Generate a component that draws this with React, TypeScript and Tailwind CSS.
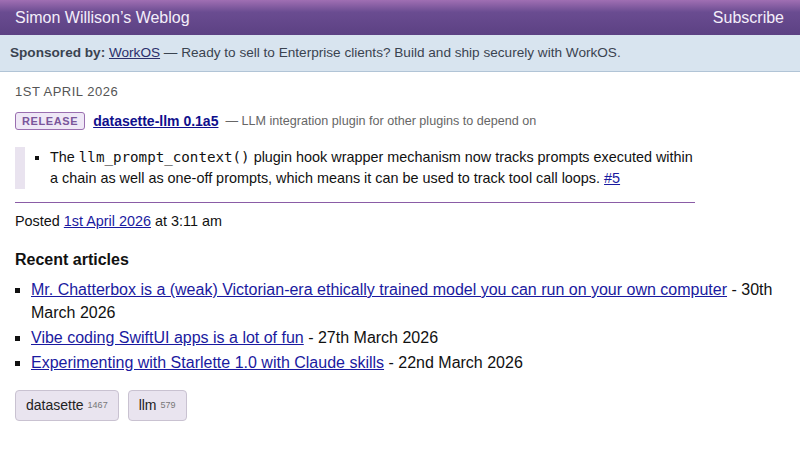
import React from "react";

export default function App() {
  const articles = [
    { title: "Mr. Chatterbox is a (weak) Victorian-era ethically trained model you can run on your own computer", date: "30th March 2026" },
    { title: "Vibe coding SwiftUI apps is a lot of fun", date: "27th March 2026" },
    { title: "Experimenting with Starlette 1.0 with Claude skills", date: "22nd March 2026" },
  ];
  return (
    <div className="w-[800px] h-[450px] overflow-hidden bg-white text-[#111]" style={{ fontFamily: '"Liberation Sans", Arial, sans-serif' }}>
      <div className="h-[35px] flex items-center justify-between px-[15px] bg-[linear-gradient(to_bottom,#a06fb3_0%,#6a4c91_35%,#5c4183_100%)] text-[#f4eefa] text-[16px]">
        <span>Simon Willison’s Weblog</span>
        <span className="pr-[1px]">Subscribe</span>
      </div>
      <div className="h-[37px] flex items-center px-[10px] bg-[#d8e4ef] border-b border-[#b1c4d6] text-[13.6px] text-[#3a4350]">
        <span className="font-bold">Sponsored by:</span>
        <span>&nbsp;</span>
        <a className="underline text-[#2b2f6b]">WorkOS</a>
        <span>&nbsp;— Ready to sell to Enterprise clients? Build and ship securely with WorkOS.</span>
      </div>
      <div className="px-[15px]">
        <div className="w-[680px]">
          <div className="mt-[12px] h-[15px] leading-[15px] text-[13px] uppercase tracking-[0.5px] text-[#555]">1st April 2026</div>
          <div className="mt-[12px] h-[20px] flex items-center text-[12.6px]">
            <span className="h-[18px] flex items-center px-[6px] rounded-[3px] border border-[#9a6fb0] bg-[#efe8f6] text-[#7b569b] text-[11px] font-bold tracking-[0.6px]">RELEASE</span>
            <a className="ml-[8px] font-bold text-[14px] text-[#0f0f8c] underline">datasette-llm 0.1a5</a>
            <span className="ml-[7px] text-[#666]">— LLM integration plugin for other plugins to depend on</span>
          </div>
          <div className="mt-[16px] border-l-[10px] border-[#e9e3ef] pl-[25px] text-[14.4px] leading-[21px]">
            <ul className="list-[square] pl-0">
              <li>
                The <code className="text-[14.2px]" style={{ fontFamily: '"DejaVu Sans Mono", monospace' }}>llm_prompt_context()</code> plugin hook wrapper mechanism now tracks prompts executed within a chain as well as one-off prompts, which means it can be used to track tool call loops. <a className="underline text-[#1a1aa0]">#5</a>
              </li>
            </ul>
          </div>
          <div className="mt-[13px] h-[1px] bg-[#8a5ca6]" />
          <div className="mt-[9px] h-[18px] text-[14.4px] leading-[18px]">
            Posted <a className="underline text-[#1a1aa0]">1st April 2026</a> at 3:11 am
          </div>
        </div>
        <div className="mt-[20px] text-[16px] font-bold leading-[20px]">Recent articles</div>
        <ul className="mt-[8px] list-[square] pl-[16px] text-[16px] leading-[23px]">
          {articles.map((a) => (
            <li key={a.title} className="mb-[2px]">
              <a className="underline text-[#1a1aa0]">{a.title}</a> - {a.date}
            </li>
          ))}
        </ul>
        <div className="mt-[16px] flex gap-[9px]">
          <span className="h-[31px] flex items-center px-[10px] rounded-[4px] border border-[#c9c2d1] bg-[#e9e4ef] text-[14px] text-[#222]">
            datasette<span className="ml-[4px] text-[9px] text-[#777]">1467</span>
          </span>
          <span className="h-[31px] flex items-center px-[10px] rounded-[4px] border border-[#c9c2d1] bg-[#e9e4ef] text-[14px] text-[#222]">
            llm<span className="ml-[4px] text-[9px] text-[#777]">579</span>
          </span>
        </div>
      </div>
    </div>
  );
}
